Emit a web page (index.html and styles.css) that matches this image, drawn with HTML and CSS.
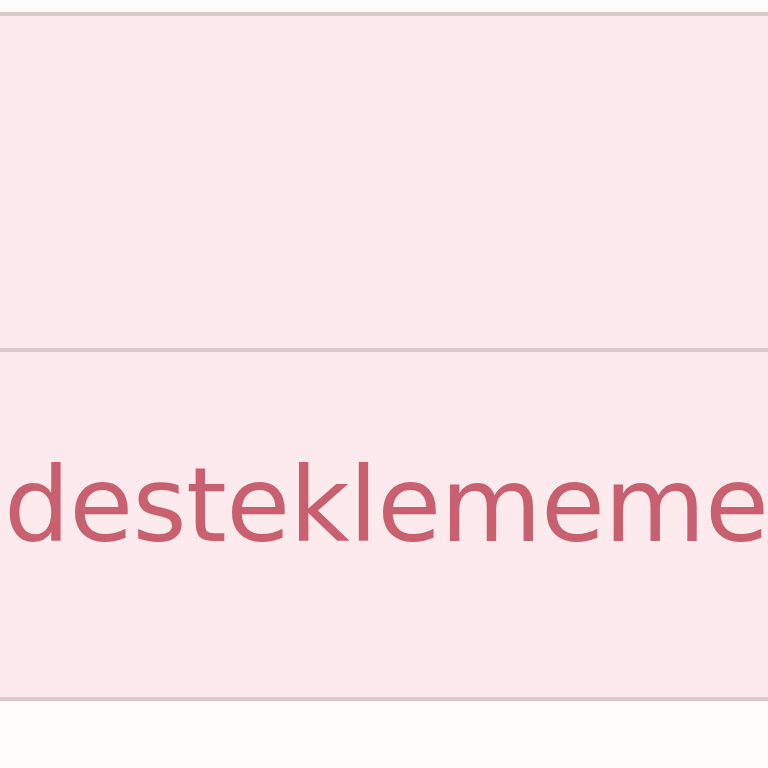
FILE: index.html
```html
<!DOCTYPE html>
<html lang="tr">
<head>
<meta charset="utf-8">
<title>desteklememe</title>
<link rel="stylesheet" href="styles.css">
</head>
<body>
<div class="table">
  <div class="row row-empty"></div>
  <div class="row row-text"><span class="cell-text">desteklememe</span></div>
</div>
</body>
</html>
```
FILE: styles.css
```css
html, body {
  margin: 0;
  padding: 0;
  background: #fffdfc;
  overflow: hidden;
}
.table {
  padding-top: 12px;
  width: 768px;
}
.row {
  background: #fdeaec;
  border-top: 4px solid #dccaca;
  box-sizing: border-box;
}
.row-empty {
  height: 336px;
}
.row-text {
  height: 353px;
  border-bottom: 4px solid #dccaca;
  display: flex;
  align-items: flex-start;
  padding-top: 90px;
  padding-left: 4px;
  white-space: nowrap;
  overflow: hidden;
}
.cell-text {
  font-family: "DejaVu Sans", sans-serif;
  font-size: 104px;
  line-height: 126px;
  color: #c9606f;
  letter-spacing: -0.7px;
}
```
